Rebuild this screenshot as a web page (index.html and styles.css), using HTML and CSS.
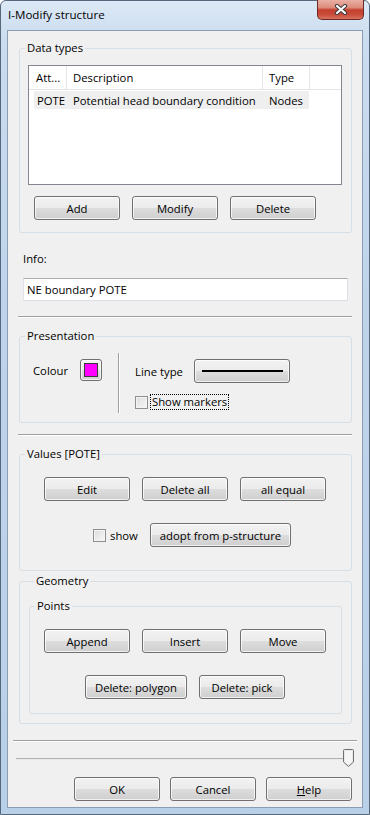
FILE: index.html
```html
<!DOCTYPE html>
<html lang="en">
<head>
  <meta charset="UTF-8" />
  <title>I-Modify structure</title>
  <link rel="stylesheet" href="styles.css">
</head>
<body>
  <div class="window">
    <div class="titlebar">
      <span class="title">I-Modify structure</span>
      <span class="close">
        <svg width="14" height="11" viewBox="0 0 14 11">
          <path d="M3 2 L11 9 M11 2 L3 9" stroke="#3b3b3b" stroke-width="4.2" stroke-linecap="round" />
          <path d="M3 2 L11 9 M11 2 L3 9" stroke="#ffffff" stroke-width="2.2" stroke-linecap="round" />
        </svg>
      </span>
    </div>

    <div class="client">
      <fieldset class="group data-types">
        <legend>Data types</legend>
        <div class="group-body">
          <div class="list">
            <div class="list-head">
              <span class="hcell col-att">Att...</span>
              <span class="hcell col-desc">Description</span>
              <span class="hcell col-type">Type</span>
              <span class="hcell col-rest"></span>
            </div>
            <div class="list-row">
              <span class="rcell r-att">POTE</span>
              <span class="rcell r-desc">Potential head boundary condition</span>
              <span class="rcell r-type">Nodes</span>
            </div>
          </div>
          <div class="btn-row">
            <button class="btn">Add</button>
            <button class="btn">Modify</button>
            <button class="btn">Delete</button>
          </div>
        </div>
      </fieldset>

      <div class="info">
        <label for="info">Info:</label>
        <input type="text" id="info" value="NE boundary POTE" />
      </div>

      <div class="sep"></div>

      <fieldset class="group presentation">
        <legend>Presentation</legend>
        <div class="pres-body">
          <div class="colour-cell">
            <span class="colour-label">Colour</span>
            <button class="btn swatch-btn"><span class="swatch"></span></button>
          </div>
          <div class="vsep"></div>
          <div class="line-cell">
            <div class="line-row">
              <span class="line-label">Line type</span>
              <button class="btn line-btn"><span class="line-sample"></span></button>
            </div>
            <div class="check-row">
              <span class="checkbox"></span>
              <span class="focus-label">Show markers</span>
            </div>
          </div>
        </div>
      </fieldset>

      <div class="sep sep-2"></div>

      <fieldset class="group values">
        <legend>Values [POTE]</legend>
        <div class="values-body">
          <div class="btn-row">
            <button class="btn">Edit</button>
            <button class="btn">Delete all</button>
            <button class="btn">all equal</button>
          </div>
          <div class="show-row">
            <span class="checkbox"></span>
            <span class="show-label">show</span>
            <button class="btn adopt-btn">adopt from p-structure</button>
          </div>
        </div>
      </fieldset>

      <fieldset class="group geometry">
        <legend>Geometry</legend>
        <fieldset class="group points">
          <legend>Points</legend>
          <div class="points-body">
            <div class="btn-row">
              <button class="btn">Append</button>
              <button class="btn">Insert</button>
              <button class="btn">Move</button>
            </div>
            <div class="btn-row delete-row">
              <button class="btn poly-btn">Delete: polygon</button>
              <button class="btn">Delete: pick</button>
            </div>
          </div>
        </fieldset>
      </fieldset>

      <div class="sep sep-3"></div>

      <div class="slider">
        <div class="track"></div>
        <svg class="thumb" width="11" height="18" viewBox="0 0 11 18">
          <path d="M1.5 0.5 H9.5 Q10.5 0.5 10.5 1.5 V13 L5.5 17.5 L0.5 13 V1.5 Q0.5 0.5 1.5 0.5 Z" fill="#e9e9e9" stroke="#707070" />
          <path d="M2 2 H9 V12.5 L5.5 15.8 L2 12.5 Z" fill="#f6f6f6" />
        </svg>
      </div>

      <div class="dialog-buttons">
        <button class="btn">OK</button>
        <button class="btn">Cancel</button>
        <button class="btn"><u>H</u>elp</button>
      </div>
    </div>
  </div>
</body>
</html>
```

FILE: styles.css
```css
* {
  box-sizing: border-box;
}

body {
  margin: 0;
  font-family: 'Open Sans', 'Liberation Sans', sans-serif;
  font-size: 11.3px;
  color: #000;
  background: #fff;
}

.window {
  width: 370px;
  height: 815px;
  border: 1px solid #56687c;
  border-radius: 6px 6px 0 0;
  background: linear-gradient(to bottom, #dce9f6 0px, #cadcef 40px, #bfd4eb 300px, #b9d0e9 815px);
  padding: 0 6px 6px 6px;
  display: flex;
  flex-direction: column;
}

.titlebar {
  height: 29px;
  display: flex;
  justify-content: space-between;
  align-items: flex-start;
}

.title {
  padding: 6px 0 0 1px;
  line-height: 15px;
  font-size: 11.6px;
}

.close {
  width: 47px;
  height: 20px;
  margin: -1px -1px 0 0;
  border: 1px solid #6b2b24;
  border-top: none;
  border-radius: 0 0 5px 5px;
  background: linear-gradient(to bottom, #eab0a4 0%, #dc8b7b 40%, #c4402e 52%, #c84a38 75%, #d8725f 100%);
  display: flex;
  align-items: center;
  justify-content: center;
}

.client {
  flex: 1;
  border: 1px solid #8a9db3;
  background: #f0f0f0;
  display: flex;
  flex-direction: column;
}

.group {
  border: 1px solid #d5dfe5;
  border-radius: 3px;
  padding: 0;
  margin: 0;
  min-width: 0;
}

.group legend {
  margin-left: 5px;
  padding: 0 2px;
  line-height: 16px;
}

.btn {
  font-family: inherit;
  font-size: 11.3px;
  color: #000;
  width: 86px;
  height: 24px;
  padding: 0;
  border: 1px solid #707070;
  border-radius: 3px;
  background: linear-gradient(to bottom, #f2f2f2 0%, #ebebeb 50%, #dddddd 50%, #cfcfcf 100%);
  box-shadow: inset 0 0 0 1px rgba(255,255,255,0.7);
}

.btn-row {
  display: flex;
  gap: 12px;
}

/* data types */
.data-types {
  margin: 9px 10px 0 11px;
}

.group-body {
  padding: 9px 9px 12px 8px;
}

.list {
  height: 120px;
  border: 1px solid #828790;
  background: #fff;
}

.list-head {
  height: 24px;
  display: flex;
  border-bottom: 1px solid #e5e5e5;
}

.hcell {
  display: flex;
  align-items: center;
  border-right: 1px solid #e5e5e5;
  line-height: 15px;
}

.col-att {
  width: 38px;
  padding-left: 7px;
}

.col-desc {
  width: 196px;
  padding-left: 6px;
}

.col-type {
  width: 47px;
  padding-left: 6px;
}

.col-rest {
  flex: 1;
  border-right: none;
}

.list-row {
  margin: 1px 0 0 5px;
  width: 275px;
  height: 18px;
  display: flex;
  align-items: center;
  background: #efefef;
  line-height: 15px;
}

.r-att {
  width: 33px;
  padding-left: 3px;
}

.r-desc {
  width: 196px;
  padding-left: 6px;
  white-space: nowrap;
}

.r-type {
  padding-left: 6px;
}

.data-types .btn-row {
  margin: 11px 0 0 6px;
}

/* info */
.info {
  margin-top: 18px;
  padding-left: 15px;
  display: flex;
  flex-direction: column;
}

.info label {
  line-height: 15px;
}

.info input {
  margin-top: 12px;
  width: 325px;
  height: 23px;
  padding: 0 3px;
  font-family: inherit;
  font-size: 11.3px;
  color: #000;
  border: 1px solid #dbdfe6;
  border-top-color: #abadb3;
  border-left-color: #e2e3ea;
  background: #fff;
  outline: none;
}

.sep {
  margin: 15px 10px 0 10px;
  height: 2px;
  border-top: 1px solid #a0a0a0;
  border-bottom: 1px solid #fff;
}

/* presentation */
.presentation {
  margin: 10px 10px 0 11px;
}

.pres-body {
  display: flex;
  padding: 9px 0 9px 13px;
}

.colour-cell {
  display: flex;
  align-items: center;
  align-self: flex-start;
  margin-top: 6px;
}

.colour-label {
  width: 47px;
  line-height: 15px;
}

.swatch-btn {
  width: 22px;
  height: 22px;
  display: flex;
  align-items: center;
  justify-content: center;
}

.swatch {
  width: 14px;
  height: 14px;
  background: #ff00ff;
  border: 1px solid #3a3a3a;
}

.vsep {
  margin-left: 16px;
  width: 2px;
  border-left: 1px solid #a0a0a0;
  border-right: 1px solid #fff;
}

.line-cell {
  margin-left: 15px;
  padding: 6px 0 3px 0;
}

.line-row {
  display: flex;
  align-items: center;
}

.line-label {
  width: 59px;
  line-height: 15px;
}

.line-btn {
  width: 96px;
  display: flex;
  align-items: center;
  justify-content: center;
}

.line-sample {
  width: 81px;
  height: 2px;
  background: #000;
}

.check-row {
  margin-top: 11px;
  display: flex;
  align-items: center;
}

.checkbox {
  width: 13px;
  height: 13px;
  border: 1px solid #8e8f8f;
  background: linear-gradient(135deg, #dcdcdc, #f8f8f8);
  box-shadow: inset 0 0 0 1px #f4f4f4;
}

.focus-label {
  margin-left: 2px;
  padding: 0 1px;
  height: 16px;
  line-height: 14px;
  border: 1px dotted #000;
}

.sep-2 {
  margin-top: 11px;
}

/* values */
.values {
  margin: 10px 10px 0 11px;
}

.values-body {
  padding: 15px 0 23px 24px;
}

.show-row {
  margin: 22px 0 0 49px;
  display: flex;
  align-items: center;
}

.show-label {
  width: 44px;
  padding-left: 4px;
  line-height: 15px;
}

.adopt-btn {
  width: 141px;
}

/* geometry */
.geometry {
  margin: 2px 10px 0 11px;
  padding: 0 9px 9px 9px;
}

.points {
  margin-top: 9px;
}

.points-body {
  padding: 15px 0 14px 14px;
}

.delete-row {
  margin: 22px 0 0 41px;
}

.poly-btn {
  width: 102px;
}

.sep-3 {
  margin: 16px 5px 0 5px;
}

/* slider */
.slider {
  margin-top: 7px;
  height: 18px;
  padding: 0 8px 0 8px;
  display: flex;
  align-items: center;
}

.track {
  flex: 1;
  height: 2px;
  border-top: 1px solid #b0b0b0;
  border-bottom: 1px solid #e7eaea;
  margin-top: 1px;
}

.thumb {
  margin-left: -3px;
  display: block;
}

.dialog-buttons {
  margin-top: 10px;
  padding-right: 10px;
  display: flex;
  justify-content: flex-end;
  gap: 10px;
}
```
